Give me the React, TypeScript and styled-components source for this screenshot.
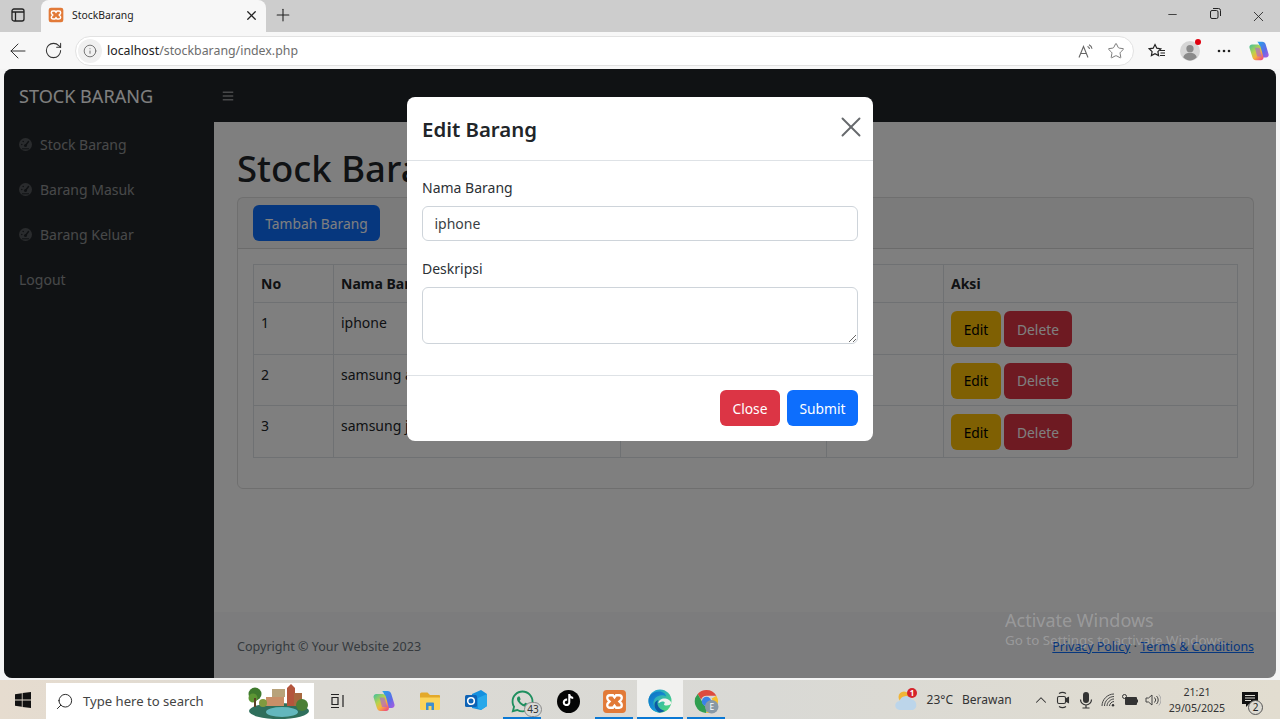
import styled, { createGlobalStyle } from 'styled-components';
import { ArrowLeft, ChevronUp, Info, Minus, Plus, RotateCw, Search, Star, X } from 'lucide-react';
import { FaBars, FaWhatsapp } from 'react-icons/fa';
import { SiTiktok } from 'react-icons/si';

const FONT = '"Noto Sans", "Open Sans", sans-serif';

const GlobalStyle = createGlobalStyle`
  html, body { margin: 0; padding: 0; height: 100%; overflow: hidden; }
  #root { height: 100%; }
  * { box-sizing: border-box; }
  body { font-family: ${FONT}; color: #212529; }
`;

const Screen = styled.div`
  width: 1280px;
  height: 719px;
  display: flex;
  flex-direction: column;
  background: #f4f4f4;
  overflow: hidden;
`;

/* browser chrome */
const TabStrip = styled.div`
  height: 32px;
  background: #cdcdcd;
  display: flex;
  align-items: center;
  flex-shrink: 0;
`;

const SideToggle = styled.div`
  width: 41px;
  height: 32px;
  padding: 0 5px 2px 0;
  display: flex;
  align-items: center;
  justify-content: center;
`;

const Tab = styled.div`
  width: 225px;
  height: 32px;
  background: #f7f7f7;
  border-radius: 8px 8px 0 0;
  display: flex;
  align-items: center;
  padding: 0 7px 2px 7px;
  font-size: 10.4px;
  color: #222;
  gap: 8px;
`;

const TabTitle = styled.span`
  flex: 1;
`;

const NewTab = styled.div`
  width: 34px;
  padding-bottom: 2px;
  display: flex;
  justify-content: center;
`;

const StripSpacer = styled.div`
  flex: 1;
`;

const WindowButton = styled.div`
  width: 43px;
  display: flex;
  justify-content: center;
  color: #222;
`;

const WindowButtons = styled.div`
  display: flex;
`;

const Toolbar = styled.div`
  height: 37px;
  background: #f7f7f7;
  display: flex;
  align-items: center;
  flex-shrink: 0;
  color: #333;
`;

const ToolButton = styled.div<{ $w: number }>`
  width: ${p => p.$w}px;
  height: 32px;
  display: flex;
  align-items: center;
  justify-content: center;
  flex-shrink: 0;
  position: relative;
`;

const Omnibox = styled.div`
  width: 1059px;
  height: 30px;
  background: #fff;
  border: 1px solid #e2e2e2;
  border-radius: 15px;
  display: flex;
  align-items: center;
  flex-shrink: 0;
  margin-left: 4px;
  padding-right: 2px;
`;

const InfoChip = styled.div`
  width: 24px;
  height: 24px;
  margin-left: 2px;
  border-radius: 50%;
  background: #f0f0f0;
  display: flex;
  align-items: center;
  justify-content: center;
  color: #666;
`;

const Url = styled.div`
  flex: 1;
  margin-left: 5px;
  font-size: 12.35px;
  color: #6d6d6d;
  b { font-weight: 400; color: #222; }
`;

const OmniIcon = styled.div`
  width: 30px;
  display: flex;
  justify-content: center;
  color: #666;
`;

const RedDot = styled.span`
  position: absolute;
  top: 4px;
  right: -1px;
  width: 6px;
  height: 6px;
  border-radius: 50%;
  background: #e0000f;
`;

/* page */
const PageWrap = styled.div`
  flex: 1;
  padding: 0 4px 2px;
  min-height: 0;
  display: flex;
`;

const Page = styled.div`
  flex: 1;
  position: relative;
  display: flex;
  border-radius: 8px;
  overflow: hidden;
  background: #fff;
`;

const Sidebar = styled.aside`
  width: 210px;
  background: #212529;
  flex-shrink: 0;
  display: flex;
  flex-direction: column;
`;

const Brand = styled.div`
  height: 53px;
  padding: 0 15px;
  display: flex;
  align-items: center;
  font-size: 18.1px;
  color: #fff;
`;

const NavItem = styled.div`
  height: 45px;
  padding: 0 15px;
  display: flex;
  align-items: center;
  gap: 8px;
  font-size: 14px;
  color: rgba(255, 255, 255, 0.5);
`;

const Content = styled.div`
  flex: 1;
  display: flex;
  flex-direction: column;
  min-width: 0;
`;

const TopBar = styled.div`
  height: 53px;
  background: #212529;
  display: flex;
  align-items: center;
  padding: 0 8px;
  color: rgba(255, 255, 255, 0.5);
  font-size: 12px;
`;

const Main = styled.main`
  flex: 1;
  padding: 0 22px 0 23px;
`;

const Heading = styled.h1`
  margin: 0;
  height: 75px;
  padding-top: 23px;
  font-size: 36.5px;
  line-height: 46px;
  font-weight: 500;
`;

const Card = styled.div`
  border: 1px solid rgba(0, 0, 0, 0.13);
  border-radius: 6px;
  height: 292px;
`;

const CardHeader = styled.div`
  height: 51px;
  padding: 7px 15px;
  background: rgba(0, 0, 0, 0.03);
  border-bottom: 1px solid rgba(0, 0, 0, 0.13);
`;

const CardBody = styled.div`
  padding: 15px;
`;

const Button = styled.button<{ $bg: string; $fg?: string; $w: number }>`
  width: ${p => p.$w}px;
  height: 36px;
  border: 0;
  border-radius: 6px;
  padding: 0;
  font-family: ${FONT};
  font-size: 13.8px;
  background: ${p => p.$bg};
  color: ${p => p.$fg || '#fff'};
`;

const Table = styled.table`
  width: 985px;
  border-collapse: collapse;
  table-layout: fixed;
  font-size: 14px;
  th, td {
    border: 1px solid #dee2e6;
    padding: 8px 8px 6px 7px;
    text-align: left;
    vertical-align: top;
    line-height: 23px;
  }
  th { height: 38px; font-weight: 700; line-height: 22px; padding-bottom: 7px; }
  td { height: 51.67px; }
`;

const Actions = styled.div`
  display: flex;
  gap: 3px;
`;

const Footer = styled.footer`
  height: 66px;
  flex-shrink: 0;
  background: #f8f9fa;
  padding: 2px 22px 0 23px;
  display: flex;
  align-items: center;
  justify-content: space-between;
  font-size: 12.55px;
  color: #6c757d;
`;

const FooterLinks = styled.span`
  font-size: 12.4px;
`;

const FooterLink = styled.a`
  color: #0d6efd;
  text-decoration: underline;
`;

const Backdrop = styled.div`
  position: absolute;
  inset: 0;
  background: rgba(0, 0, 0, 0.5);
  display: flex;
  justify-content: center;
  align-items: flex-start;
  padding-top: 28px;
`;

const Modal = styled.div`
  width: 466px;
  height: 344px;
  background: #fff;
  border-radius: 8px;
  display: flex;
  flex-direction: column;
`;

const ModalHeader = styled.div`
  height: 64px;
  padding: 0 5px 0 15px;
  border-bottom: 1px solid #dee2e6;
  display: flex;
  align-items: center;
  justify-content: space-between;
  color: #66696c;
  svg { margin-top: -3px; }
`;

const ModalTitle = styled.h5`
  margin: 0;
  font-size: 20.4px;
  font-weight: 600;
  color: #212529;
`;

const ModalBody = styled.div`
  flex: 1;
  padding: 15px 15px 0;
`;

const Label = styled.label<{ $mt?: number }>`
  display: block;
  font-size: 14px;
  line-height: 23px;
  color: #2c3136;
  margin-top: ${p => p.$mt || 0}px;
  margin-bottom: 7px;
`;

const Input = styled.input`
  display: block;
  width: 436px;
  height: 35px;
  padding: 0 11.5px;
  border: 1px solid #ced4da;
  border-radius: 6px;
  font-family: ${FONT};
  font-size: 14px;
  color: #3a3f44;
  outline: none;
`;

const TextArea = styled.textarea`
  display: block;
  width: 436px;
  height: 57px;
  border: 1px solid #ced4da;
  border-radius: 6px;
  outline: none;
`;

const ModalFooter = styled.div`
  height: 66px;
  border-top: 1px solid #dee2e6;
  padding: 14px 15px;
  display: flex;
  justify-content: flex-end;
  gap: 7px;
`;

const Watermark = styled.div`
  position: absolute;
  left: 1001px;
  top: 539px;
  color: rgba(255, 255, 255, 0.24);
  font-size: 13.4px;
  line-height: 17px;
  white-space: nowrap;
  div:first-child { font-size: 18px; line-height: 24px; }
`;

/* taskbar */
const Taskbar = styled.div`
  height: 39px;
  background: linear-gradient(90deg, #e6dccf 0%, #dcdad4 25%, #d9d9d5 60%, #e2ddd0 100%);
  display: flex;
  align-items: center;
  flex-shrink: 0;
`;

const StartButton = styled.div`
  width: 46px;
  height: 39px;
  display: flex;
  align-items: center;
  justify-content: center;
`;

const SearchBox = styled.div`
  width: 268px;
  height: 36px;
  margin: 3px 1px 0 0;
  background: #fff;
  display: flex;
  align-items: center;
  padding: 0 4px 0 9px;
  font-size: 13.1px;
  color: #444;
  gap: 9px;
  svg { flex-shrink: 0; }
`;

const SearchText = styled.span`
  flex: 1;
`;

const TaskItem = styled.div<{ $running?: boolean; $active?: boolean }>`
  width: 46px;
  height: 39px;
  padding-top: 3px;
  position: relative;
  display: flex;
  align-items: center;
  justify-content: center;
  background: ${p => (p.$active ? '#f1f1ef' : 'transparent')};
  &::after {
    content: '';
    display: ${p => (p.$running || p.$active ? 'block' : 'none')};
    position: absolute;
    bottom: 0;
    left: ${p => (p.$active ? 0 : 4)}px;
    right: ${p => (p.$active ? 0 : 4)}px;
    height: 2px;
    background: #0a78d4;
  }
`;

const CountBadge = styled.span`
  position: absolute;
  right: 3px;
  bottom: 2px;
  width: 18px;
  height: 15px;
  border-radius: 8px;
  border: 1px solid #8a8a8a;
  background: #d9d9d6;
  font-size: 10px;
  line-height: 13px;
  text-align: center;
  color: #333;
`;

const TiktokGlyph = styled.span`
  position: absolute;
  top: 14px;
  left: 17px;
  line-height: 0;
`;

const Tray = styled.div`
  flex: 1;
  display: flex;
  align-items: center;
  justify-content: flex-end;
  color: #333;
`;

const Weather = styled.div`
  display: flex;
  align-items: center;
  font-size: 12px;
  gap: 9px;
  margin-right: 18px;
  color: #333;
`;

const Temp = styled.span`
  margin-left: -2px;
`;

const TrayIcon = styled.div`
  width: 22.4px;
  display: flex;
  justify-content: center;
  align-items: center;
`;

const Clock = styled.div`
  width: 60px;
  margin: 0 9px 0 3px;
  text-align: center;
  font-size: 10.6px;
  line-height: 16px;
  color: #333;
  white-space: nowrap;
`;

const Notify = styled.div`
  width: 44px;
  height: 39px;
  padding-right: 16px;
  position: relative;
  display: flex;
  align-items: center;
  justify-content: center;
`;

const NotifyCount = styled.span`
  position: absolute;
  right: 17px;
  bottom: 4px;
  width: 15px;
  height: 15px;
  border: 1px solid #555;
  border-radius: 50%;
  background: #dcdad2;
  font-size: 10px;
  line-height: 13px;
  text-align: center;
  color: #222;
`;

const GaugeIcon = () => (
  <svg width="13" height="13" viewBox="0 0 13 13">
    <circle cx="6.500" cy="6.500" r="6.500" fill="#53565a" />
    <path d="M6.500 7.500L9.500 3.500" stroke="#212529" strokeWidth="1.500" strokeLinecap="round" />
    <circle cx="6.500" cy="7.500" r="1.500" fill="#212529" />
    <circle cx="2.800" cy="6.500" r="0.800" fill="#212529" />
    <circle cx="4.200" cy="3.500" r="0.800" fill="#212529" />
    <path d="M3 10.800h7" stroke="#212529" strokeWidth="1" />
  </svg>
);

const XamppIcon = ({ size }: { size: number }) => (
  <svg width={size} height={size} viewBox="0 0 24 24">
    <rect x="1" y="1" width="22" height="22" rx="3.500" fill="#e27a38" />
    <path
      d="M7.500 6h3l1.500 2 1.500-2h3c1.600 0 2.500 1.200 2.500 2.600 0 1.400-1 2.400-2.200 3.400 1.200 1 2.200 2 2.200 3.400 0 1.400-.9 2.600-2.500 2.600h-3L12 16l-1.500 2h-3C5.900 18 5 16.800 5 15.400 5 14 6 13 7.200 12 6 11 5 10 5 8.600 5 7.200 5.900 6 7.500 6z"
      fill="none"
      stroke="#fff"
      strokeWidth="2.200"
    />
  </svg>
);

const CopilotIcon = ({ id }: { id: string }) => (
  <svg width="24" height="24" viewBox="0 0 24 24">
    <defs>
      <linearGradient id={`${id}a`} x1="0" y1="0" x2="1" y2="1">
        <stop offset="0" stopColor="#1fa7e8" />
        <stop offset="0.6" stopColor="#5f6be8" />
        <stop offset="1" stopColor="#b05be0" />
      </linearGradient>
      <linearGradient id={`${id}b`} x1="0" y1="0" x2="0.8" y2="1">
        <stop offset="0" stopColor="#3ec0a0" />
        <stop offset="0.45" stopColor="#b9d34c" />
        <stop offset="0.7" stopColor="#f6b13c" />
        <stop offset="1" stopColor="#f0507a" />
      </linearGradient>
    </defs>
    <path d="M10 2h5.500c2 0 3.200 1.100 3.800 3l3.200 10.500c.5 1.900-.9 3.500-2.800 3.500H15L12.500 6.500C12 4.500 11.500 3 10 2z" fill={`url(#${id}a)`} />
    <path d="M4.500 5h6c1.800 0 2.800 1 3.300 2.600l3 11c.6 2-.9 3.400-2.800 3.400H8.500c-1.800 0-3-1.100-3.600-3L1.600 8.500C1.100 6.600 2.600 5 4.500 5z" fill={`url(#${id}b)`} />
    <path d="M7.500 8.500h5l2.600 9.500H10z" fill="#a65fd8" opacity="0.6" />
  </svg>
);

const IslandArt = () => (
  <svg width="64" height="36" viewBox="0 0 64 36">
    <ellipse cx="33" cy="28" rx="30" ry="8" fill="#2f6f5c" />
    <ellipse cx="36" cy="29" rx="16" ry="5" fill="#63b7bd" />
    <circle cx="9" cy="11" r="6.500" fill="#3f7a2e" />
    <circle cx="7" cy="15" r="4.500" fill="#5d9634" />
    <rect x="8" y="15" width="2" height="9" fill="#5b4326" />
    <rect x="26" y="6" width="13" height="8" fill="#b8a27a" />
    <rect x="20" y="14" width="18" height="9" fill="#c98f68" />
    <path d="M41 5l4-4 4 4v18h-8z" fill="#b4553c" />
    <rect x="48" y="10" width="8" height="13" fill="#a8683f" />
    <circle cx="56" cy="22" r="6" fill="#4b7f35" />
    <circle cx="17" cy="20" r="4" fill="#7f9a3f" />
  </svg>
);

const rows = [
  { no: 1, name: 'iphone' },
  { no: 2, name: 'samsung a52' },
  { no: 3, name: 'samsung j7' },
];

export default function App() {
  return (
    <Screen>
      <GlobalStyle />
      <TabStrip>
        <SideToggle>
          <svg width="14" height="14" viewBox="0 0 14 14" fill="none" stroke="#222" strokeWidth="1.300">
            <rect x="1" y="1" width="12" height="12" rx="2" />
            <path d="M1 4h12M4.500 4v9" />
          </svg>
        </SideToggle>
        <Tab>
          <XamppIcon size={16} />
          <TabTitle>StockBarang</TabTitle>
          <X size={15} color="#222" strokeWidth={2} />
        </Tab>
        <NewTab>
          <Plus size={20} color="#222" strokeWidth={1.300} />
        </NewTab>
        <StripSpacer />
        <WindowButtons>
          <WindowButton>
            <Minus size={13} strokeWidth={1.500} />
          </WindowButton>
          <WindowButton>
            <svg width="11" height="11" viewBox="0 0 11 11" fill="none" stroke="#222">
              <rect x="0.500" y="2.500" width="7.500" height="8" rx="1.500" />
              <path d="M3 0.500h5.500a2 2 0 0 1 2 2V8" />
            </svg>
          </WindowButton>
          <WindowButton>
            <X size={17} strokeWidth={1.200} />
          </WindowButton>
        </WindowButtons>
      </TabStrip>

      <Toolbar>
        <ToolButton $w={36}>
          <ArrowLeft size={24} strokeWidth={1} />
        </ToolButton>
        <ToolButton $w={35}>
          <RotateCw size={19} strokeWidth={1.300} />
        </ToolButton>
        <Omnibox>
          <InfoChip>
            <Info size={14} strokeWidth={1.500} />
          </InfoChip>
          <Url>
            <b>localhost</b>/stockbarang/index.php
          </Url>
          <OmniIcon>
            <svg width="16" height="14" viewBox="0 0 16 14" fill="none" stroke="#666" strokeWidth="1.100">
              <path d="M1 13.500L5.500 2.500 10 13.500M2.500 9.500h6" />
              <path d="M9.500 2.500a3 3 0 0 1 2 2.500M11 .8a5 5 0 0 1 3 4" />
            </svg>
          </OmniIcon>
          <OmniIcon>
            <Star size={18} strokeWidth={1.150} />
          </OmniIcon>
        </Omnibox>
        <ToolButton $w={46}>
          <svg width="18" height="16" viewBox="0 0 18 16" fill="none" stroke="#222" strokeWidth="1.200">
            <path d="M7 1.500l1.800 3.700 4 .6-2.900 2.800.7 4-3.600-1.900-3.600 1.900.7-4L1.200 5.800l4-.6z" />
            <path d="M12 7.500h5M12.500 10h4.500M12 12.500h5" />
          </svg>
        </ToolButton>
        <ToolButton $w={20}>
          <svg width="22" height="22" viewBox="0 0 22 22">
            <circle cx="11" cy="11" r="11" fill="#d6d6d6" />
            <circle cx="11" cy="8.500" r="4" fill="#8a8a8a" />
            <path d="M3.500 18c1-3.500 4-5 7.500-5s6.500 1.500 7.500 5a10 10 0 0 1-15 0z" fill="#8a8a8a" />
          </svg>
          <RedDot />
        </ToolButton>
        <ToolButton $w={48}>
          <svg width="14" height="4" viewBox="0 0 14 4" fill="#222">
            <circle cx="2" cy="2" r="1.300" />
            <circle cx="7" cy="2" r="1.300" />
            <circle cx="12" cy="2" r="1.300" />
          </svg>
        </ToolButton>
        <ToolButton $w={22}>
          <CopilotIcon id="cpa" />
        </ToolButton>
      </Toolbar>

      <PageWrap>
        <Page>
          <Sidebar>
            <Brand>STOCK BARANG</Brand>
            <NavItem>
              <GaugeIcon />
              Stock Barang
            </NavItem>
            <NavItem>
              <GaugeIcon />
              Barang Masuk
            </NavItem>
            <NavItem>
              <GaugeIcon />
              Barang Keluar
            </NavItem>
            <NavItem>Logout</NavItem>
          </Sidebar>
          <Content>
            <TopBar>
              <FaBars />
            </TopBar>
            <Main>
              <Heading>Stock Barang</Heading>
              <Card>
                <CardHeader>
                  <Button $bg="#0d6efd" $w={127}>
                    Tambah Barang
                  </Button>
                </CardHeader>
                <CardBody>
                  <Table>
                    <colgroup>
                      <col style={{ width: 80 }} />
                      <col style={{ width: 287 }} />
                      <col style={{ width: 206 }} />
                      <col style={{ width: 117 }} />
                      <col />
                    </colgroup>
                    <thead>
                      <tr>
                        <th>No</th>
                        <th>Nama Barang</th>
                        <th>Deskripsi</th>
                        <th>Stok</th>
                        <th>Aksi</th>
                      </tr>
                    </thead>
                    <tbody>
                      {rows.map(row => (
                        <tr key={row.no}>
                          <td>{row.no}</td>
                          <td>{row.name}</td>
                          <td />
                          <td />
                          <td>
                            <Actions>
                              <Button $bg="#ffc107" $fg="#000" $w={50}>
                                Edit
                              </Button>
                              <Button $bg="#dc3545" $w={68}>
                                Delete
                              </Button>
                            </Actions>
                          </td>
                        </tr>
                      ))}
                    </tbody>
                  </Table>
                </CardBody>
              </Card>
            </Main>
            <Footer>
              <span>Copyright © Your Website 2023</span>
              <FooterLinks>
                <FooterLink>Privacy Policy</FooterLink> · <FooterLink>Terms &amp; Conditions</FooterLink>
              </FooterLinks>
            </Footer>
          </Content>

          <Backdrop>
            <Modal>
              <ModalHeader>
                <ModalTitle>Edit Barang</ModalTitle>
                <X size={34} strokeWidth={1.350} />
              </ModalHeader>
              <ModalBody>
                <Label>Nama Barang</Label>
                <Input defaultValue="iphone" />
                <Label $mt={16}>Deskripsi</Label>
                <TextArea />
              </ModalBody>
              <ModalFooter>
                <Button $bg="#dc3545" $w={60}>
                  Close
                </Button>
                <Button $bg="#0d6efd" $w={71}>
                  Submit
                </Button>
              </ModalFooter>
            </Modal>
          </Backdrop>
          <Watermark>
            <div>Activate Windows</div>
            <div>Go to Settings to activate Windows.</div>
          </Watermark>
        </Page>
      </PageWrap>

      <Taskbar>
        <StartButton>
          <svg width="16" height="16" viewBox="0 0 16 16" fill="#111">
            <path d="M0 2.200l6.800-1v6.300H0zM7.600 1.100L16 0v7.500H7.600zM0 8.400h6.800v6.400l-6.800-1zM7.600 8.400H16V16l-8.400-1.100z" />
          </svg>
        </StartButton>
        <SearchBox>
          <Search size={19} strokeWidth={1.200} color="#222" style={{ transform: 'scaleX(-1)' }} />
          <SearchText>Type here to search</SearchText>
          <IslandArt />
        </SearchBox>
        <TaskItem>
          <svg width="16" height="16" viewBox="0 0 16 16" fill="none" stroke="#222" strokeWidth="1.200">
            <path d="M1 1.500h8M1 14.500h8M2 4.500h6v7H2zM13 2v12" />
          </svg>
        </TaskItem>
        <TaskItem>
          <CopilotIcon id="cpb" />
        </TaskItem>
        <TaskItem>
          <svg width="22" height="20" viewBox="0 0 22 20">
            <path d="M1 3a1.500 1.500 0 0 1 1.500-1.500h6L11 4h9a1 1 0 0 1 1 1v3H1z" fill="#e3a92b" />
            <path d="M1 6.500h20v11a1.500 1.500 0 0 1-1.500 1.500h-17A1.500 1.500 0 0 1 1 17.500z" fill="#fbd45b" />
            <path d="M7 19v-6.500a1 1 0 0 1 1-1h6a1 1 0 0 1 1 1V19h-2.500v-4h-3v4z" fill="#3f8fcf" />
          </svg>
        </TaskItem>
        <TaskItem>
          <svg width="24" height="22" viewBox="0 0 24 22">
            <path d="M8 4l9-4 6 4v12l-6 4-9-2z" fill="#1490df" />
            <path d="M14 8l9-4v12l-6 4-3-2z" fill="#28a8ea" />
            <rect x="1" y="5" width="12" height="12" rx="1.500" fill="#0f63b5" />
            <circle cx="7" cy="11" r="3.300" fill="none" stroke="#fff" strokeWidth="1.600" />
          </svg>
        </TaskItem>
        <TaskItem $running>
          <FaWhatsapp size={25} color="#1f8f5f" />
          <CountBadge>43</CountBadge>
        </TaskItem>
        <TaskItem>
          <svg width="23" height="23" viewBox="0 0 23 23">
            <circle cx="11.500" cy="11.500" r="11.500" fill="#050505" />
          </svg>
          <TiktokGlyph>
            <SiTiktok size={12} color="#fff" />
          </TiktokGlyph>
        </TaskItem>
        <TaskItem $running>
          <XamppIcon size={25} />
        </TaskItem>
        <TaskItem $active>
          <svg width="24" height="24" viewBox="0 0 24 24">
            <defs>
              <linearGradient id="edgeA" x1="0.2" y1="0" x2="1" y2="0.8">
                <stop offset="0" stopColor="#1d9fd8" />
                <stop offset="1" stopColor="#4fd67a" />
              </linearGradient>
              <linearGradient id="edgeB" x1="0" y1="0" x2="0.6" y2="1">
                <stop offset="0" stopColor="#0f6fc0" />
                <stop offset="1" stopColor="#1aa0e0" />
              </linearGradient>
            </defs>
            <circle cx="12" cy="12" r="11.500" fill="url(#edgeA)" />
            <path d="M.5 12C.5 6 5.500 2.500 11 2.500c4 0 7 2.500 7 5-1.500-1-3.500-1.500-6-1-4 .8-7 4-6.500 8.500.4 3.500 3 6.500 7 8.500C5.500 23.500.5 18.500.5 12z" fill="url(#edgeB)" />
            <path d="M10.500 14c0-3 3.500-5 7-4.500 2.500.4 5 2 6 4.500-.3 1.500-2.500 2.500-5 2.500-1.200 0-2.500-.3-2.500-1.300 0-.7 1-.9.7-1.700-.3-.8-2-1.200-3.300-.7-1.500.5-2.900 2-2.900.7z" fill="#f1f1ef" />
            <path d="M11 23.500c-3-2-5-5-4.500-8.500.3-2 2-3.500 4-4-1 1.300-1.300 3-.8 5 .8 3 3.500 5 7.300 6-1.800.9-4 1.500-6 1.500z" fill="#0c59a4" />
          </svg>
        </TaskItem>
        <TaskItem $running>
          <svg width="25" height="25" viewBox="0 0 24 24">
            <path d="M12 1a11 11 0 0 1 9.500 5.500H12a5.500 5.500 0 0 0-5.200 3.700L3.500 4.800A11 11 0 0 1 12 1z" fill="#dd4b3e" />
            <path d="M21.500 6.500A11 11 0 0 1 11.500 23l4.800-7.600a5.500 5.500 0 0 0 .7-6.400z" fill="#f6c02d" />
            <path d="M11.500 23A11 11 0 0 1 3.500 4.800L8 12.500a5 5 0 0 0 5.500 4.300z" fill="#2f9e4f" />
            <circle cx="12" cy="12" r="4.500" fill="#3b82e6" />
            <circle cx="17" cy="17" r="6.500" fill="#8899a6" />
            <text x="17" y="20" fontSize="8" fill="#fff" textAnchor="middle" fontFamily={FONT}>E</text>
          </svg>
        </TaskItem>
        <Tray>
          <Weather>
            <svg width="26" height="24" viewBox="0 0 26 24">
              <circle cx="10" cy="9" r="5.500" fill="#f0b537" />
              <path d="M6 22a4.500 4.500 0 0 1-.5-9 6.500 6.500 0 0 1 12-1.500A5.500 5.500 0 0 1 19 22z" fill="#bcd5ea" />
              <circle cx="18" cy="5" r="5" fill="#d5232b" />
              <text x="18" y="8" fontSize="8" fill="#fff" textAnchor="middle" fontWeight="700" fontFamily={FONT}>1</text>
            </svg>
            <Temp>23°C</Temp>
            <span>Berawan</span>
          </Weather>
          <TrayIcon>
            <ChevronUp size={18} strokeWidth={1.400} />
          </TrayIcon>
          <TrayIcon>
            <svg width="14" height="18" viewBox="0 0 14 18" fill="none" stroke="#333" strokeWidth="1.100">
              <path d="M3 2.500C5 1.200 8 1.200 10 2.500M3 15.500c2 1.300 5 1.300 7 0" />
              <rect x="1.500" y="5.500" width="8" height="7" rx="1.500" />
              <path d="M9.500 8l3-1.500v5l-3-1.500" fill="#333" />
            </svg>
          </TrayIcon>
          <TrayIcon>
            <svg width="14" height="18" viewBox="0 0 14 18">
              <rect x="4" y="1" width="6" height="11" rx="3" fill="#333" />
              <path d="M1.500 8.500a5.500 5.500 0 0 0 11 0M7 14v2.500M3.500 17h7" fill="none" stroke="#333" strokeWidth="1.200" />
            </svg>
          </TrayIcon>
          <TrayIcon>
            <svg width="14" height="14" viewBox="0 0 14 14" fill="none" stroke="#444" strokeWidth="1">
              <path d="M1 13C1 6.500 6.500 1 13 1M3.500 13c0-5 4.500-9.500 9.500-9.500M6 13c0-3.500 3.500-7 7-7M8.500 13c0-2 2-4.500 4.500-4.500" />
              <circle cx="12" cy="12.300" r="1.200" fill="#333" stroke="none" />
            </svg>
          </TrayIcon>
          <TrayIcon>
            <svg width="16" height="12" viewBox="0 0 16 12">
              <rect x="3" y="3" width="12" height="8" rx="1" fill="#333" />
              <circle cx="2.500" cy="2.500" r="2" fill="none" stroke="#333" />
              <rect x="15" y="5.500" width="1" height="3" fill="#333" />
            </svg>
          </TrayIcon>
          <TrayIcon>
            <svg width="16" height="14" viewBox="0 0 16 14" fill="none" stroke="#444" strokeWidth="1">
              <path d="M1 5v4h2.500L7 12V2L3.500 5z" />
              <path d="M9.500 4.500a3.500 3.500 0 0 1 0 5M11.500 3a5.500 5.500 0 0 1 0 8" />
              <path d="M13.800 1.500a8 8 0 0 1 0 11" stroke="#aaa" />
            </svg>
          </TrayIcon>
          <Clock>
            21:21
            <br />
            29/05/2025
          </Clock>
          <Notify>
            <svg width="16" height="16" viewBox="0 0 16 16">
              <path d="M0 0h16v12H7l-3 3v-3H0z" fill="#111" />
              <path d="M3 3.500h10M3 6h10M3 8.500h6" stroke="#dcdad2" strokeWidth="1" />
            </svg>
            <NotifyCount>2</NotifyCount>
          </Notify>
        </Tray>
      </Taskbar>
    </Screen>
  );
}
